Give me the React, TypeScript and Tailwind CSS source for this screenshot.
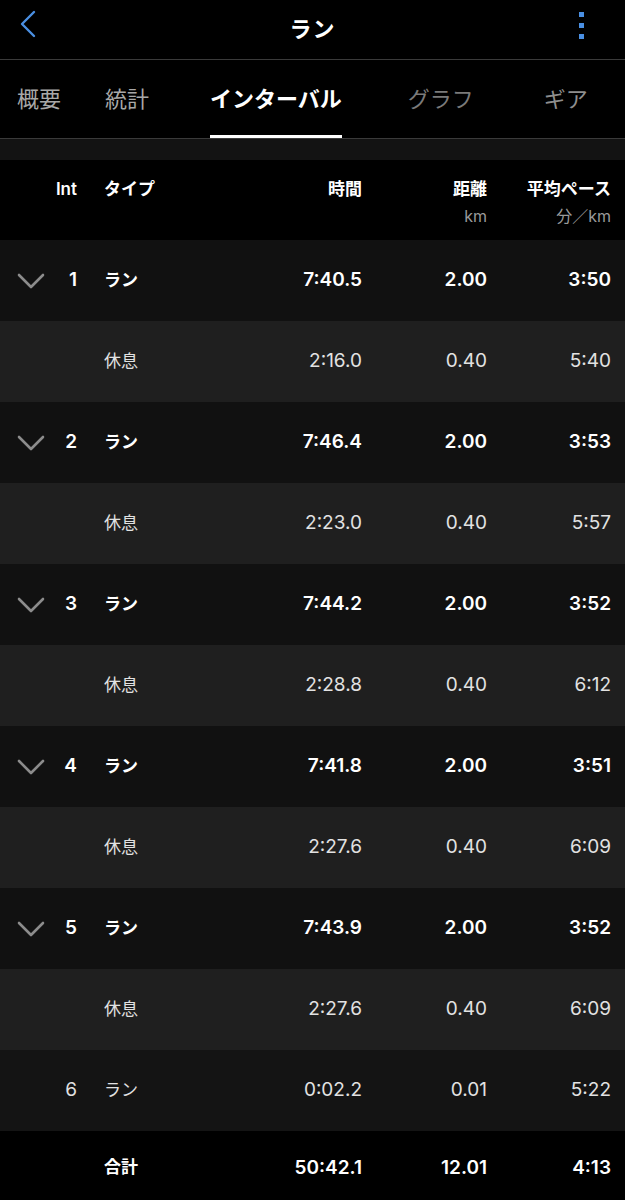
import React from "react";

type Row = {
  kind: "run" | "rest" | "last";
  n?: string;
  type: string;
  time: string;
  dist: string;
  pace: string;
};

const rows: Row[] = [
  { kind: "run", n: "1", type: "ラン", time: "7:40.5", dist: "2.00", pace: "3:50" },
  { kind: "rest", type: "休息", time: "2:16.0", dist: "0.40", pace: "5:40" },
  { kind: "run", n: "2", type: "ラン", time: "7:46.4", dist: "2.00", pace: "3:53" },
  { kind: "rest", type: "休息", time: "2:23.0", dist: "0.40", pace: "5:57" },
  { kind: "run", n: "3", type: "ラン", time: "7:44.2", dist: "2.00", pace: "3:52" },
  { kind: "rest", type: "休息", time: "2:28.8", dist: "0.40", pace: "6:12" },
  { kind: "run", n: "4", type: "ラン", time: "7:41.8", dist: "2.00", pace: "3:51" },
  { kind: "rest", type: "休息", time: "2:27.6", dist: "0.40", pace: "6:09" },
  { kind: "run", n: "5", type: "ラン", time: "7:43.9", dist: "2.00", pace: "3:52" },
  { kind: "rest", type: "休息", time: "2:27.6", dist: "0.40", pace: "6:09" },
  { kind: "last", n: "6", type: "ラン", time: "0:02.2", dist: "0.01", pace: "5:22" },
];

function Chevron() {
  return (
    <svg width="28" height="16" viewBox="0 0 28 16" className="block">
      <polyline
        points="2,2 14,14 26,2"
        fill="none"
        stroke="#8c8c8c"
        strokeWidth="2.6"
        strokeLinecap="round"
        strokeLinejoin="round"
      />
    </svg>
  );
}

function DataRow({ r }: { r: Row }) {
  const bg =
    r.kind === "run" ? "bg-[#111111]" : r.kind === "rest" ? "bg-[#1f1f1f]" : "bg-[#141414]";
  const txt =
    r.kind === "run" ? "text-white font-semibold" : "text-[#e2e2e2] font-normal";
  return (
    <div className={`flex h-[81px] items-center pr-[14px] ${bg}`}>
      <div className="flex w-[77px] items-center">
        <div className="w-[62px] pl-[17px]">{r.kind === "run" ? <Chevron /> : null}</div>
        <div className={`w-[15px] text-right text-[19px] ${txt}`}>{r.n ?? ""}</div>
      </div>
      <div className={`ml-[27px] w-[158px] text-[17px] ${txt}`}>{r.type}</div>
      <div className={`w-[100px] text-right text-[19px] ${txt}`}>{r.time}</div>
      <div className={`w-[125px] text-right text-[19px] ${txt}`}>{r.dist}</div>
      <div className={`w-[124px] text-right text-[19px] ${txt}`}>{r.pace}</div>
    </div>
  );
}

export default function App() {
  return (
    <div
      className="h-[1200px] w-[625px] overflow-hidden bg-black text-white"
      style={{ fontFamily: '"Inter", "Noto Sans CJK JP", sans-serif' }}
    >
      {/* Header */}
      <div className="relative flex h-[60px] items-center justify-center border-b border-[#3a3a3a]">
        <svg width="20" height="30" viewBox="0 0 20 30" className="absolute left-[18px] top-[9px]">
          <polyline
            points="16,3 4,15 16,27"
            fill="none"
            stroke="#4a8fe2"
            strokeWidth="2.4"
            strokeLinecap="round"
            strokeLinejoin="round"
          />
        </svg>
        <div className="text-[22px] font-bold tracking-[1px]">ラン</div>
        <div className="absolute right-[41px] top-[12px] flex flex-col gap-[6px]">
          <div className="h-[5px] w-[5px] bg-[#4a8fe2]" />
          <div className="h-[5px] w-[5px] bg-[#4a8fe2]" />
          <div className="h-[5px] w-[5px] bg-[#4a8fe2]" />
        </div>
      </div>

      {/* Tabs */}
      <div className="flex h-[79px] items-stretch border-b border-[#3a3a3a] text-[22px]">
        <div className="ml-[17px] flex items-center text-[#a8a8a8]">概要</div>
        <div className="ml-[44px] flex items-center text-[#a8a8a8]">統計</div>
        <div className="relative ml-[61px] flex items-center font-bold text-white">
          インターバル
          <div className="absolute bottom-0 left-0 right-0 h-[3px] bg-white" />
        </div>
        <div className="ml-[66px] flex items-center text-[#7a7a7a]">グラフ</div>
        <div className="ml-[70px] flex items-center text-[#8e8e8e]">ギア</div>
      </div>

      {/* band */}
      <div className="h-[21px] bg-[#131313]" />

      {/* Table header */}
      <div className="flex h-[80px] items-start pr-[14px] pt-[17px] font-semibold">
        <div className="w-[77px] text-right text-[17px]">Int</div>
        <div className="ml-[27px] w-[158px] text-[17px]">タイプ</div>
        <div className="w-[100px] text-right text-[17px]">時間</div>
        <div className="flex w-[125px] flex-col items-end">
          <div className="text-[17px]">距離</div>
          <div className="mt-[1px] text-[16px] font-normal text-[#9a9a9a]">km</div>
        </div>
        <div className="flex w-[124px] flex-col items-end">
          <div className="text-[17px]">平均ペース</div>
          <div className="mt-[1px] text-[16px] font-normal text-[#9a9a9a]">分／km</div>
        </div>
      </div>

      {rows.map((r, i) => (
        <DataRow key={i} r={r} />
      ))}

      {/* Total */}
      <div className="flex h-[70px] items-center pr-[14px] pt-[4px] font-semibold text-white">
        <div className="w-[77px]" />
        <div className="ml-[27px] w-[158px] text-[17px]">合計</div>
        <div className="w-[100px] text-right text-[19px]">50:42.1</div>
        <div className="w-[125px] text-right text-[19px]">12.01</div>
        <div className="w-[124px] text-right text-[19px]">4:13</div>
      </div>
    </div>
  );
}
